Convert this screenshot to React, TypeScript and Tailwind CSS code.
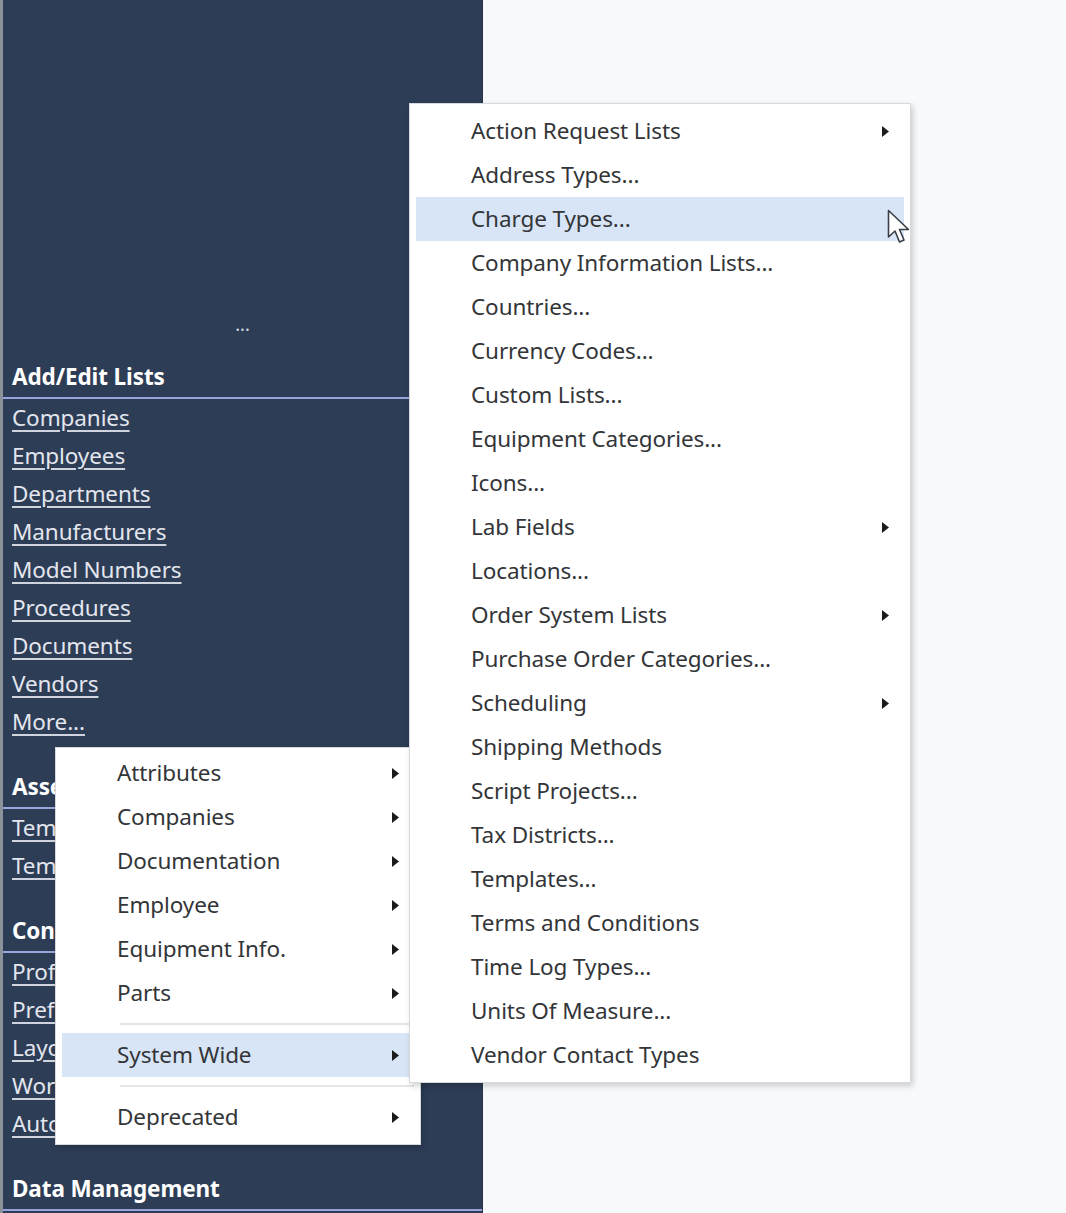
import React from 'react'

type MenuItem = { label: string; sub?: boolean; active?: boolean; sep?: boolean }

const addEditLinks = ['Companies', 'Employees', 'Departments', 'Manufacturers', 'Model Numbers', 'Procedures', 'Documents', 'Vendors', 'More...']
const assetLinks = ['Templates', 'Template Groups']
const configLinks = ['Profiles', 'Preferences', 'Layouts', 'Workflows', 'Automation']

const leftMenu: MenuItem[] = [
  { label: 'Attributes', sub: true },
  { label: 'Companies', sub: true },
  { label: 'Documentation', sub: true },
  { label: 'Employee', sub: true },
  { label: 'Equipment Info.', sub: true },
  { label: 'Parts', sub: true },
  { label: '', sep: true },
  { label: 'System Wide', sub: true, active: true },
  { label: '', sep: true },
  { label: 'Deprecated', sub: true },
]

const rightMenu: MenuItem[] = [
  { label: 'Action Request Lists', sub: true },
  { label: 'Address Types...' },
  { label: 'Charge Types...', active: true },
  { label: 'Company Information Lists...' },
  { label: 'Countries...' },
  { label: 'Currency Codes...' },
  { label: 'Custom Lists...' },
  { label: 'Equipment Categories...' },
  { label: 'Icons...' },
  { label: 'Lab Fields', sub: true },
  { label: 'Locations...' },
  { label: 'Order System Lists', sub: true },
  { label: 'Purchase Order Categories...' },
  { label: 'Scheduling', sub: true },
  { label: 'Shipping Methods' },
  { label: 'Script Projects...' },
  { label: 'Tax Districts...' },
  { label: 'Templates...' },
  { label: 'Terms and Conditions' },
  { label: 'Time Log Types...' },
  { label: 'Units Of Measure...' },
  { label: 'Vendor Contact Types' },
]

const font = { fontFamily: '"Noto Sans", "Open Sans", sans-serif' }

function Arrow() {
  return (
    <svg width="7" height="11" viewBox="0 0 7 11" className="shrink-0">
      <polygon points="0,0 7,5.5 0,11" fill="#1b1b1b" />
    </svg>
  )
}

function SectionHeader({ title, first }: { title: string; first?: boolean }) {
  return (
    <div className={first ? '' : 'mt-[26px]'}>
      <div className="flex h-[40px] items-center pl-[9px] text-[22.5px] font-bold tracking-[-0.1px] text-white">{title}</div>
      <div className="h-[2px] bg-[#9aa3dc]" />
    </div>
  )
}

function LinkRow({ label }: { label: string }) {
  return (
    <div className="flex h-[38px] items-center pl-[9px]">
      <span className="whitespace-nowrap text-[22.5px] tracking-[-0.1px] text-[#e3e6ee] underline decoration-[#cfd4de] underline-offset-[4px]">
        {label}
      </span>
    </div>
  )
}

function Menu({ items, className }: { items: MenuItem[]; className: string }) {
  return (
    <div
      className={`absolute border border-[#d7d9dd] bg-white px-[6px] shadow-[2px_3px_6px_rgba(0,0,0,0.18)] ${className}`}
      style={font}
    >
      {items.map((item, i) =>
        item.sep ? (
          <div key={i} className="flex h-[18px] items-center pl-[58px]">
            <div className="h-[2px] w-full bg-[#e4e5e8]" />
          </div>
        ) : (
          <div
            key={i}
            className={`flex h-[44px] items-center justify-between pl-[55px] pr-[15px] ${item.active ? 'bg-[#d8e5f6]' : ''}`}
          >
            <span className="whitespace-nowrap text-[22.5px] tracking-[-0.1px] text-[#333538]">{item.label}</span>
            {item.sub && <Arrow />}
          </div>
        ),
      )}
    </div>
  )
}

function Cursor() {
  return (
    <svg className="absolute left-[887px] top-[209px]" width="26" height="38" viewBox="0 0 26 38">
      <path
        d="M1.5 1.5 L1.5 28 L8 22 L12.5 33 L17 31 L12.5 20.5 L21.5 20.5 Z"
        fill="#ffffff"
        stroke="#3a3f47"
        strokeWidth="1.6"
        strokeLinejoin="round"
      />
    </svg>
  )
}

export default function App() {
  return (
    <div className="relative flex h-[1213px] w-[1066px] overflow-hidden bg-[#f8f9fb]" style={font}>
      <aside className="flex h-full w-[483px] shrink-0 flex-col border-l-[3px] border-r border-l-[#8c929c] border-r-[#263349] bg-[#2d3d56]">
        <div className="flex h-[357px] shrink-0 items-end justify-center pb-[24px]">
          <span className="text-[18px] leading-none text-[#d6dae2]">...</span>
        </div>
        <SectionHeader title="Add/Edit Lists" first />
        {addEditLinks.map(l => (
          <LinkRow key={l} label={l} />
        ))}
        <SectionHeader title="Asset Management" />
        {assetLinks.map(l => (
          <LinkRow key={l} label={l} />
        ))}
        <SectionHeader title="Configuration" />
        {configLinks.map(l => (
          <LinkRow key={l} label={l} />
        ))}
        <SectionHeader title="Data Management" />
      </aside>
      <div className="flex-1" />

      <Menu items={leftMenu} className="left-[55px] top-[747px] w-[366px] pb-[5px] pt-[3px]" />
      <Menu items={rightMenu} className="left-[409px] top-[103px] w-[502px] py-[5px]" />
      <Cursor />
    </div>
  )
}
